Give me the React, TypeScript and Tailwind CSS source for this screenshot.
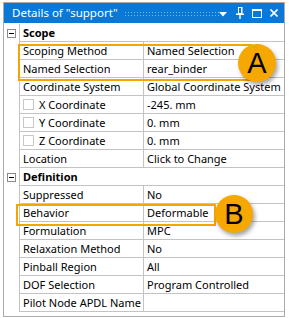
type Row = {
  label: string;
  value?: string;
  group?: boolean;
  check?: boolean;
};

const rows: Row[] = [
  { label: "Scope", group: true },
  { label: "Scoping Method", value: "Named Selection" },
  { label: "Named Selection", value: "rear_binder" },
  { label: "Coordinate System", value: "Global Coordinate System" },
  { label: "X Coordinate", value: "-245. mm", check: true },
  { label: "Y Coordinate", value: "0. mm", check: true },
  { label: "Z Coordinate", value: "0. mm", check: true },
  { label: "Location", value: "Click to Change" },
  { label: "Definition", group: true },
  { label: "Suppressed", value: "No" },
  { label: "Behavior", value: "Deformable" },
  { label: "Formulation", value: "MPC" },
  { label: "Relaxation Method", value: "No" },
  { label: "Pinball Region", value: "All" },
  { label: "DOF Selection", value: "Program Controlled" },
  { label: "Pilot Node APDL Name", value: "" },
];

const MinusBox = () => (
  <div className="w-[9px] h-[9px] border border-[#8a8a8a] bg-white flex items-center justify-center">
    <div className="w-[5px] h-px bg-black" />
  </div>
);

const TitleIcons = () => (
  <div className="flex items-center">
    <svg width="8" height="5" viewBox="0 0 8 5" className="mt-[3px]">
      <polygon points="0,0 8,0 4,4.5" fill="white" />
    </svg>
    <svg width="8" height="12" viewBox="0 0 8 12" className="ml-[9px]">
      <rect x="2.5" y="0.5" width="3" height="6" fill="none" stroke="white" />
      <rect x="5" y="0" width="1.5" height="7" fill="white" />
      <rect x="0" y="6.5" width="8" height="1.5" fill="white" />
      <rect x="3.3" y="8" width="1.4" height="4" fill="white" />
    </svg>
    <svg width="10" height="9" viewBox="0 0 10 9" className="ml-[8px]">
      <rect x="0.5" y="0.5" width="9" height="8" fill="none" stroke="white" />
      <rect x="0" y="0" width="10" height="2" fill="white" />
    </svg>
    <svg width="8" height="8" viewBox="0 0 8 8" className="ml-[8px] mr-[6px]">
      <path d="M0.5 0.5 L7.5 7.5 M7.5 0.5 L0.5 7.5" stroke="white" strokeWidth="1.6" />
    </svg>
  </div>
);

const Badge = ({ letter, className }: { letter: string; className: string }) => (
  <div
    className={`absolute w-[38px] h-[38px] rounded-full bg-[#f6a800] shadow-[2px_3px_4px_rgba(0,0,0,0.35)] flex items-center justify-center text-[29px] leading-none text-black font-['Liberation_Sans',sans-serif] ${className}`}
  >
    {letter}
  </div>
);

export default function App() {
  return (
    <div className="relative w-[289px] h-[318px] bg-white font-['Noto_Sans',sans-serif] text-[11px] text-black">
      <div className="ml-[3px] mt-[2px] w-[282px] h-[315px] border border-[#ababab] flex flex-col">
        {/* title bar */}
        <div className="h-[20px] bg-[#0a78d6] flex items-center pl-[8px] text-white text-[11.5px]">
          <span className="whitespace-nowrap">Details of "support"</span>
          <div className="ml-[6px] w-[101px] h-[6px] mt-[1px] bg-[radial-gradient(circle,#7fb8ea_0.7px,transparent_0.9px)] bg-[length:3px_3px]" />
          <div className="flex-1" />
          <TitleIcons />
        </div>

        {/* property grid */}
        <div className="mt-[1px] flex flex-col">
          {rows.map((r) => (
            <div key={r.label} className="flex h-[18px]">
              <div className="w-[15px] flex items-center justify-center">
                {r.group && <MinusBox />}
              </div>
              {r.group ? (
                <div className="flex-1 border-l border-b border-[#c3c3c3] pl-[3px] font-bold leading-[17px]">
                  {r.label}
                </div>
              ) : (
                <>
                  <div className="w-[124px] border-l border-b border-[#c3c3c3] pl-[3px] flex items-center leading-[17px] whitespace-nowrap overflow-hidden">
                    {r.check && (
                      <div className="w-[11px] h-[11px] border border-[#c8c8c8] mr-[5px] shrink-0" />
                    )}
                    {r.label}
                  </div>
                  <div className="flex-1 border-l border-b border-[#c3c3c3] pl-[3px] leading-[17px] whitespace-nowrap overflow-hidden">
                    {r.value}
                  </div>
                </>
              )}
            </div>
          ))}
        </div>
      </div>

      {/* callout highlights */}
      <div className="absolute left-[18px] top-[42px] w-[234px] h-[37px] border-2 border-[#f5a500]" />
      <div className="absolute left-[16px] top-[202px] w-[200px] h-[22px] border-2 border-[#f5a500]" />
      <Badge letter="A" className="left-[238px] top-[42px]" />
      <Badge letter="B" className="left-[215px] top-[193px]" />
    </div>
  );
}
